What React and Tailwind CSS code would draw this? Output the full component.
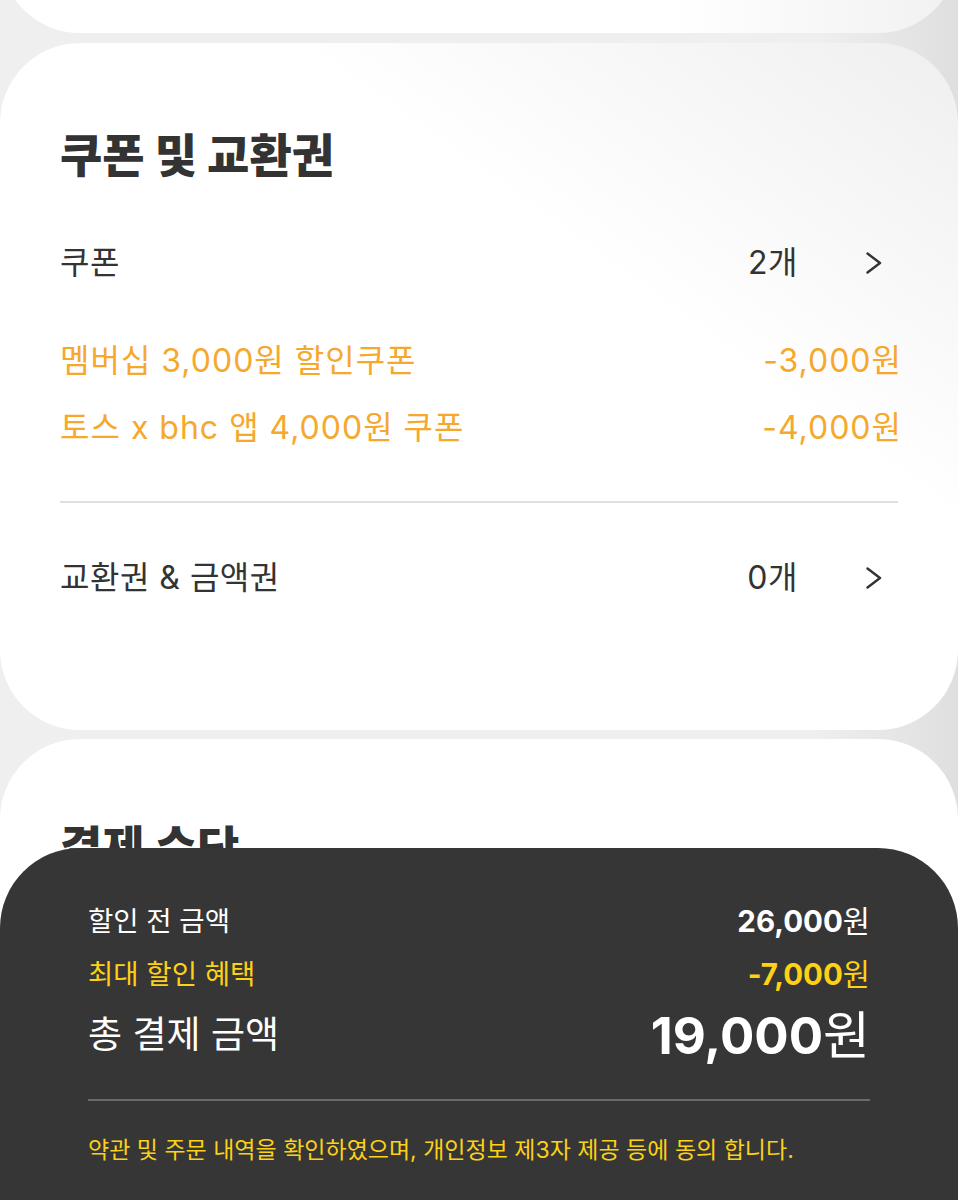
const FONT = { fontFamily: '"Inter", "Noto Sans CJK KR", sans-serif' }

function Chevron() {
  return (
    <svg width="16" height="22" viewBox="0 0 16 22" fill="none" className="shrink-0">
      <path d="M1.5 1.5 L14 11 L1.5 20.5" stroke="#333333" strokeWidth="2.4" strokeLinecap="round" strokeLinejoin="round" />
    </svg>
  )
}

function CountRow({ label, count }) {
  return (
    <div className="flex h-[60px] items-center justify-between tracking-[0.5px]">
      <span className="text-[32px] text-[#333333]">{label}</span>
      <div className="flex items-center gap-[68px] pr-[16px]">
        <span className="text-[32px] text-[#333333]">{count}</span>
        <Chevron />
      </div>
    </div>
  )
}

function CouponLine({ name, amount }) {
  return (
    <div className="-mr-[4px] flex h-[67px] items-center justify-between text-[32px] tracking-[1px] text-[#f6a82c]">
      <span>{name}</span>
      <span>{amount}</span>
    </div>
  )
}

export default function App() {
  return (
    <div style={FONT} className="min-h-[1200px] w-full overflow-hidden bg-linear-to-l from-[#dfdfdf] via-[#efefef] via-15% to-[#efefef]">
      {/* previous card, only its bottom shows */}
      <div className="-mt-[167px] h-[200px] rounded-b-[80px] bg-linear-to-l from-[#f1f1f1] via-white via-30% to-white" />

      <section className="mt-[10px] h-[687px] rounded-[80px] bg-linear-to-bl from-[#efefef] via-white via-35% to-white px-[60px] pt-[82px]">
        <h2 className="flex h-[60px] items-center text-[46px] font-extrabold text-[#333333]">쿠폰 및 교환권</h2>
        <div className="mt-[48px]">
          <CountRow label="쿠폰" count="2개" />
        </div>
        <div className="mt-[34px]">
          <CouponLine name="멤버십 3,000원 할인쿠폰" amount="-3,000원" />
          <CouponLine name="토스 x bhc 앱 4,000원 쿠폰" amount="-4,000원" />
        </div>
        <div className="mt-[40px] h-[2px] bg-[#e0e0e0]" />
        <div className="mt-[45px]">
          <CountRow label="교환권 & 금액권" count="0개" />
        </div>
      </section>

      <section className="mt-[9px] h-[500px] rounded-t-[80px] bg-white px-[60px] pt-[78px]">
        <h2 className="flex h-[60px] items-center text-[46px] font-extrabold text-[#333333]">결제 수단</h2>
      </section>

      <div className="fixed inset-x-0 bottom-0 h-[352px] rounded-t-[80px] bg-[#363636] px-[88px] pt-[47px]">
        <div className="flex h-[53px] items-center justify-between text-white">
          <span className="text-[27.5px]">할인 전 금액</span>
          <span className="text-[29.5px]">
            <span className="font-bold">26,000</span>원
          </span>
        </div>
        <div className="flex h-[53px] items-center justify-between text-[#fcd116]">
          <span className="text-[27.5px]">최대 할인 혜택</span>
          <span className="text-[29.5px]">
            <span className="font-bold">-7,000</span>원
          </span>
        </div>
        <div className="flex h-[68px] items-center justify-between text-white">
          <span className="text-[37px]">총 결제 금액</span>
          <span className="text-[51px] leading-none">
            <span className="font-bold">19,000</span>원
          </span>
        </div>
        <div className="mt-[30px] h-[2px] bg-[#6a6a6a]" />
        <p className="mt-[29px] flex h-[40px] items-center text-[23px] text-[#fcd116]">
          약관 및 주문 내역을 확인하였으며, 개인정보 제3자 제공 등에 동의 합니다.
        </p>
      </div>
    </div>
  )
}
